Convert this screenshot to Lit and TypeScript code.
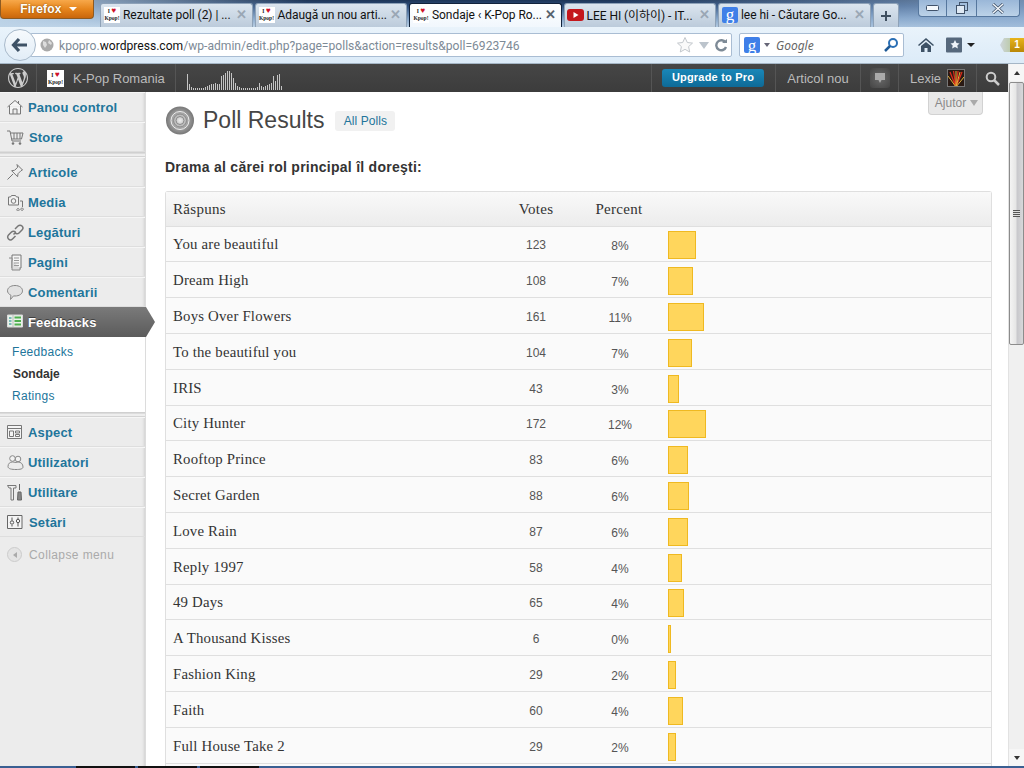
import { LitElement, css, html, svg } from 'lit';
import { customElement } from 'lit/decorators.js';

const POLL = [
  ['You are beautiful', 123, 8, 28],
  ['Dream High', 108, 7, 25],
  ['Boys Over Flowers', 161, 11, 36],
  ['To the beautiful you', 104, 7, 24],
  ['IRIS', 43, 3, 11],
  ['City Hunter', 172, 12, 38],
  ['Rooftop Prince', 83, 6, 20],
  ['Secret Garden', 88, 6, 21],
  ['Love Rain', 87, 6, 20],
  ['Reply 1997', 58, 4, 14],
  ['49 Days', 65, 4, 16],
  ['A Thousand Kisses', 6, 0, 3],
  ['Fashion King', 29, 2, 8],
  ['Faith', 60, 4, 15],
  ['Full House Take 2', 29, 2, 8],
  ['', 0, 0, 0],
] as const;

const SPARK = [16, 6, 3, 2, 2, 2, 2, 2, 2, 3, 4, 5, 6, 6, 7, 6, 6, 14, 15, 17, 19, 19, 17, 12, 7, 4, 3, 2, 2, 2, 2, 2, 2, 2, 2, 3, 7, 4, 3, 4, 5, 6, 7, 14, 9, 15, 16, 4];

const ICONS: Record<string, unknown> = {
  home: svg`<path d="M1.500 9 9 2.500 16.500 9M3.500 8v8h11V8M7 16v-5h4v5M12.500 3v3" fill="#f4f4f4" stroke="#777"/>`,
  cart: svg`<path d="M1 3h3l2 10h9M4.500 5H17l-1.500 6H5.800M8 5v6M11 5v6M14 5v6" fill="none" stroke="#777"/><circle cx="7" cy="15.500" r="1.300" fill="#777"/><circle cx="14" cy="15.500" r="1.300" fill="#777"/>`,
  pin: svg`<path d="M11 1.500 16.500 7l-1.500.7-3 3-.4 3-6-6 3-.4 3-3zM7 11 1.500 16.500" fill="#eee" stroke="#777"/>`,
  media: svg`<path d="M2.500 4h2l1-1.500h4L10.500 4h2v8h-10z" fill="#f2f2f2" stroke="#777"/><circle cx="7.500" cy="8" r="2.300" fill="none" stroke="#777"/><path d="M14 8h2.500v6M12 15.500a1.200 1.200 0 1 0 .1 0M16 15a1.200 1.200 0 1 0 .1 0" fill="none" stroke="#777"/>`,
  link: svg`<path d="m9 6 3-3a2.800 2.800 0 0 1 4 4l-3 3a2.800 2.800 0 0 1-4 0M10 9 7.500 11.500M9.500 9a2.800 2.800 0 0 0-4 0l-3 3a2.800 2.800 0 0 0 4 4l3-3" fill="none" stroke="#777" stroke-width="1.500"/>`,
  pages: svg`<path d="M6 2h9v13H6z" fill="#f4f4f4" stroke="#777"/><path d="M3 5h3v12h8v-2" fill="#ddd" stroke="#888"/><path d="M8 5h5M8 7.500h5M8 10h5M8 12.500h5" stroke="#999"/>`,
  comment: svg`<path d="M9 2.500c4.400 0 7.500 2.300 7.500 5.300S13.400 13 9 13c-.5 0-1 0-1.500-.1L4.500 16.500l.4-4.300C3 11.300 1.500 9.800 1.500 7.800 1.500 4.800 4.600 2.500 9 2.500z" fill="#e2e2e2" stroke="#888"/>`,
  feedback: svg`<path d="M1.500 3h15v12h-15z" fill="#e9f3e9" stroke="#d9d9d9"/><path d="M7 3v12" stroke="#bbb"/><path d="M8.500 5.500h6.500M8.500 9h6.500M8.500 12.500h6.500" stroke="#4fb04f" stroke-width="1.800"/><path d="M3 6h2.500M3 9h2.500M3 12h2.500" stroke="#58a8a8" stroke-width="1.300"/>`,
  aspect: svg`<path d="M1.500 2.500h14v13h-14z" fill="#f4f4f4" stroke="#777"/><path d="M1.500 5.500h14M3.500 8h4v5.500h-4zM9.500 8h4v2h-4zM9.500 11.500h4v2h-4z" fill="none" stroke="#777"/>`,
  users: svg`<circle cx="6.500" cy="5.500" r="2.800" fill="#f2f2f2" stroke="#888"/><circle cx="12" cy="6" r="2.800" fill="#f2f2f2" stroke="#888"/><path d="M2 13.500c0-3 2-4.500 4.500-4.500s2 1 5.500 0c3 0 5 2 5 5 0 2-3 2.500-7 2.500s-8-.5-8-3z" fill="#ececec" stroke="#888"/>`,
  tools: svg`<path d="M1.500 2.500h8.500v2.500H7.500v12H5V5H3z" fill="#eee" stroke="#777"/><path d="M13.500 1v6M12 9h3l.5 8h-4z" fill="#888" stroke="#666"/>`,
  settings: svg`<path d="M1.500 2.500h14.500v13H1.500z" fill="#f4f4f4" stroke="#666"/><path d="M6 4.500v3M6 12v1.500M12 4.500V6M12 10v3.500" stroke="#555"/><circle cx="6" cy="9.500" r="1.700" fill="none" stroke="#555"/><circle cx="12" cy="8" r="1.700" fill="none" stroke="#555"/>`,
};

const SIDE_TOP = [
  ['home', 'Panou control', 28],
  ['cart', 'Store', 29],
];
const SIDE_MID = [
  ['pin', 'Articole', 28],
  ['media', 'Media', 28],
  ['link', 'Legături', 28],
  ['pages', 'Pagini', 28],
  ['comment', 'Comentarii', 28],
];
const SIDE_END = [
  ['aspect', 'Aspect', 28],
  ['users', 'Utilizatori', 28],
  ['tools', 'Utilitare', 28],
  ['settings', 'Setări', 29],
];

@customElement('app-root')
export class AppRoot extends LitElement {
  static override styles = css`
    :host {
      display: flex;
      flex-direction: column;
      width: 1024px;
      height: 768px;
      overflow: hidden;
      background: #fff;
      font-family: 'Liberation Sans', Arial, sans-serif;
    }

    /* browser chrome */
    .tabstrip {
      display: flex;
      height: 27px;
      box-sizing: border-box;
      background:
        linear-gradient(90deg, rgba(190, 212, 232, 0.95) 0, rgba(190, 212, 232, 0) 30%, rgba(190, 212, 232, 0) 60%, rgba(150, 180, 214, 0.7) 100%),
        linear-gradient(#1d3557 0, #2f4f7c 6px, #7d9ec4 18px, #b9cfe4 27px);
      font: 12px Roboto, 'Noto Sans CJK KR', sans-serif;
      letter-spacing: -0.05px;
      color: #111;
    }
    .ff-btn {
      width: 94px;
      height: 19px;
      margin-right: 6px;
      box-sizing: border-box;
      display: flex;
      align-items: center;
      justify-content: center;
      gap: 7px;
      padding-left: 3px;
      background: linear-gradient(#f7a84a, #e6851c 50%, #c9660c);
      border: 1px solid #8d5a22;
      border-top: 0;
      border-radius: 0 0 4px 4px;
      color: #fff;
      font: bold 12px 'Liberation Sans', sans-serif;
      letter-spacing: 0.2px;
      text-shadow: 0 0 2px #7a4306;
    }
    .ff-btn i {
      border: 4px solid transparent;
      border-top: 4px solid #fff;
      border-bottom: 0;
    }
    .tabs {
      display: flex;
      gap: 2px;
      margin-top: 3px;
    }
    .tab {
      width: 152.5px;
      box-sizing: border-box;
      display: flex;
      align-items: center;
      gap: 3px;
      padding: 0 5px 2px 3px;
      background: linear-gradient(#dbe5ef, #bccbdb);
      border: 1px solid #8ea2b8;
      border-bottom: 0;
      border-radius: 3px 3px 0 0;
      white-space: nowrap;
    }
    .tab.active {
      background: linear-gradient(#fff, #f1f7fd);
      border-color: #12233c;
      border-bottom: 0;
    }
    .tab span {
      flex: 1;
      min-width: 0;
    }
    .tab .close {
      flex: none;
      color: #9aa7b5;
      font: bold 13px 'Liberation Sans', sans-serif;
    }
    .tab.active .close {
      color: #56616d;
    }
    .yt {
      flex: none;
      margin-left: -1px;
    }
    .newtab {
      width: 26px;
      display: flex;
      align-items: center;
      justify-content: center;
      background: linear-gradient(#dbe5ef, #bccbdb);
      border: 1px solid #8ea2b8;
      border-bottom: 0;
      border-radius: 3px 3px 0 0;
      box-sizing: border-box;
    }
    .winctl {
      margin: 0 4px 0 auto;
      width: 102px;
      height: 17px;
      display: flex;
      box-sizing: border-box;
      background: linear-gradient(#9ab7d8, #bcd2e8);
      border: 1px solid #56779e;
      border-top: 0;
      border-radius: 0 0 4px 4px;
    }
    .winctl div {
      display: flex;
      align-items: center;
      justify-content: center;
      border-right: 1px solid #56779e;
    }
    .winctl div:last-child {
      border-right: 0;
    }
    .wc-min {
      width: 27px;
    }
    .wc-max {
      width: 29px;
    }
    .wc-close {
      flex: 1;
    }

    .favicon {
      flex: none;
      width: 16px;
      height: 16px;
      background: #fff;
      display: flex;
      flex-direction: column;
      align-items: center;
      justify-content: center;
      font: bold 5.5px/7px 'Liberation Serif', serif;
      letter-spacing: 0;
      color: #222;
    }
    .favicon b {
      color: #d0142c;
      font-size: 8px;
    }
    .g-icon {
      flex: none;
      width: 16px;
      height: 16px;
      border-radius: 2px;
      background: #3f7fe8;
      color: #fff;
      display: flex;
      align-items: center;
      justify-content: center;
      font: 17px/13px 'Liberation Serif', serif;
    }

    .navbar {
      height: 37px;
      box-sizing: border-box;
      display: flex;
      align-items: center;
      padding: 0 0 0 4px;
      background: linear-gradient(#e9f3fb, #dcebf8);
      border-bottom: 1px solid #a5b6c6;
      position: relative;
    }
    .back {
      width: 32px;
      height: 32px;
      flex: none;
      box-sizing: border-box;
      border-radius: 50%;
      border: 1px solid #a9bacb;
      background: linear-gradient(#f6fafd, #e2edf7);
      display: flex;
      align-items: center;
      justify-content: center;
      position: relative;
      z-index: 1;
    }
    .urlbar,
    .searchbar {
      height: 24px;
      box-sizing: border-box;
      display: flex;
      align-items: center;
      background: #fff;
      border: 1px solid #a9bdd3;
      border-radius: 2px;
    }
    .urlbar {
      width: 702px;
      margin-left: -6px;
      padding: 0 3px 0 9px;
      color: #7d8a96;
      white-space: nowrap;
      font: 12.1px Roboto, sans-serif;
    }
    .urlbar b {
      font-weight: normal;
      color: #111;
    }
    .urlbar .addr {
      margin-left: 5px;
      padding-top: 1px;
      flex: 1;
      min-width: 0;
    }
    .urlbar svg {
      flex: none;
    }
    .urlbar svg + svg {
      margin-left: 4px;
    }
    .searchbar {
      width: 165px;
      margin-left: 7px;
      padding: 0 4px 0 4px;
      color: #666;
      font: italic 12px 'Noto Sans', sans-serif;
    }
    .searchbar span {
      flex: 1;
      margin-left: 6px;
    }
    .caret {
      border: 3.5px solid transparent;
      border-top: 4px solid #667;
      border-bottom: 0;
      margin-left: 4px;
    }
    .navicons {
      display: flex;
      align-items: center;
      gap: 12px;
      margin-left: 14px;
      flex: 1;
    }
    .navicons .caret {
      border-top-color: #222;
      border-left-width: 4px;
      border-right-width: 4px;
      margin: 0 0 0 -7px;
    }
    .badge {
      margin-left: auto;
      width: 24px;
      height: 14px;
      display: flex;
      justify-content: flex-end;
      background: linear-gradient(90deg, #cfd6dc, #b6c79a 60%, #8fae5a);
      clip-path: polygon(0 50%, 4px 0, 100% 0, 100% 100%, 4px 100%);
    }
    .badge span {
      width: 14px;
      background: linear-gradient(#e8b41a, #b98707);
      color: #fff;
      font: bold 10px/14px 'Liberation Sans', sans-serif;
      text-align: center;
    }

    /* page + scrollbar */
    .viewport {
      flex: 1;
      min-height: 0;
      display: flex;
    }
    .page {
      width: 1008px;
      display: flex;
      flex-direction: column;
      position: relative;
      overflow: hidden;
    }
    .scrollbar {
      width: 16px;
      display: flex;
      flex-direction: column;
      background: #f0f0f0;
      border-left: 1px solid #e2e2e2;
      box-sizing: border-box;
    }
    .sb-up,
    .sb-down {
      height: 17px;
      display: flex;
      align-items: center;
      justify-content: center;
      background: #f6f6f6;
    }
    .sb-up i {
      border: 3.5px solid transparent;
      border-bottom: 4px solid #333;
      border-top: 0;
    }
    .sb-down i {
      border: 3.5px solid transparent;
      border-top: 4px solid #333;
      border-bottom: 0;
    }
    .sb-thumb {
      height: 263px;
      margin-top: 1px;
      box-sizing: border-box;
      border: 1px solid #8c8c8c;
      border-radius: 2px;
      background: linear-gradient(90deg, #f4f4f4, #e6e6e6 45%, #c8c8cc 55%, #d8d8da);
      display: flex;
      align-items: center;
      justify-content: center;
    }
    .sb-thumb i {
      width: 7px;
      height: 7px;
      background: repeating-linear-gradient(#555 0 1px, #ddd 1px 2px);
    }
    .sb-track {
      flex: 1;
    }
    .taskbar {
      height: 2px;
      background: #3a5f92;
      display: flex;
    }
    .taskbar i {
      width: 59px;
      margin-left: 3px;
      background: #111;
    }
    .taskbar i:first-child {
      margin-left: 76px;
    }

    /* admin bar */
    .adminbar {
      height: 28px;
      flex: none;
      display: flex;
      align-items: center;
      background: linear-gradient(#464646, #3c3c3c);
      color: #bbb;
      font-size: 13px;
    }
    .ab {
      height: 100%;
      display: flex;
      align-items: center;
      box-sizing: border-box;
      border-right: 1px solid #555;
    }
    .ab-wp {
      width: 37px;
      justify-content: center;
    }
    .ab-site {
      width: 139px;
      padding-left: 10px;
      gap: 9px;
    }
    .ab-site .favicon {
      width: 17px;
      height: 17px;
    }
    .spark {
      display: flex;
      align-items: flex-end;
      gap: 0;
      margin: 4px 0 0 11px;
      height: 20px;
    }
    .spark i {
      width: 1px;
      margin-right: 1px;
      background: #c4c4c4;
    }
    .ab-right {
      margin-left: auto;
      display: flex;
      height: 100%;
      border-left: 1px solid #555;
    }
    .ab-up {
      padding: 0 11px 0 10px;
    }
    .upgrade {
      width: 102px;
      height: 18px;
      border-radius: 3px;
      background: linear-gradient(#1a87b8, #0e6a97);
      color: #fff;
      font: bold 11px/17px 'Liberation Sans', sans-serif;
      text-align: center;
      letter-spacing: 0.2px;
    }
    .ab-new {
      width: 85px;
      justify-content: center;
    }
    .ab-bubble {
      width: 38px;
      justify-content: center;
    }
    .ab-bubble div {
      width: 20px;
      height: 20px;
      border-radius: 3px;
      background: radial-gradient(#6a6a6a, #444);
      display: flex;
      align-items: center;
      justify-content: center;
    }
    .ab-user {
      width: 78px;
      padding-left: 11px;
      gap: 6px;
    }
    .avatar {
      flex: none;
    }
    .ab-search {
      width: 31px;
      justify-content: center;
      border-right: 0;
    }

    /* wp-admin */
    .wrap {
      flex: 1;
      min-height: 0;
      display: flex;
    }
    .side {
      width: 146px;
      flex: none;
      box-sizing: border-box;
      background: #ececec;
      border-right: 1px solid #dcdcdc;
      box-shadow: inset -3px 0 3px -2px #cfcfcf;
      font-size: 13px;
      font-weight: bold;
      color: #21759b;
      letter-spacing: 0.15px;
    }
    .item {
      height: 30px;
      box-sizing: border-box;
      display: flex;
      align-items: center;
      position: relative;
      border-top: 1px solid #f6f6f6;
      border-bottom: 1px solid #dedede;
    }
    .item svg {
      position: absolute;
      left: 6px;
      top: 5px;
    }
    .side-sep {
      height: 5px;
      background: linear-gradient(#d0d0d0 0 1px, #dcdcdc 1px 2px, #eee 2px 4px, #d4d4d4 4px);
    }
    .item.current {
      background: linear-gradient(#7a7a7a, #5b5b5b);
      border: 0;
      padding-left: 28px;
      color: #fff;
      text-shadow: 0 -1px 0 #3f3f3f;
      overflow: visible;
    }
    .item.current::after {
      content: '';
      position: absolute;
      left: 145px;
      top: 0;
      width: 10px;
      height: 30px;
      background: linear-gradient(#7a7a7a, #5b5b5b);
      clip-path: polygon(0 0, 1px 0, 100% 50%, 1px 100%, 0 100%);
    }
    .sub {
      height: 75px;
      box-sizing: border-box;
      padding-top: 4px;
      background: #fff;
      font-size: 12px;
      font-weight: normal;
      line-height: 22px;
      letter-spacing: 0.3px;
    }
    .sub div {
      padding-left: 12px;
    }
    .sub .on {
      padding-left: 13px;
      color: #333;
      font-weight: bold;
      letter-spacing: 0;
    }
    .collapse {
      display: flex;
      align-items: center;
      gap: 7px;
      height: 35px;
      padding-left: 7px;
      font-size: 12px;
      font-weight: normal;
      color: #aaa;
      letter-spacing: 0.4px;
    }
    .collapse i {
      width: 15px;
      height: 15px;
      box-sizing: border-box;
      border-radius: 50%;
      border: 1px solid #ccc;
      background: #e4e4e4;
      display: flex;
      align-items: center;
      justify-content: center;
    }
    .collapse i::before {
      content: '';
      border: 3px solid transparent;
      border-right: 4px solid #aaa;
      border-left: 0;
    }

    .content {
      flex: 1;
      min-width: 0;
      padding: 14px 16px 0 19px;
      color: #333;
    }
    .title-row {
      display: flex;
      align-items: center;
      height: 29px;
    }
    .title-row h2 {
      margin: 0 11px 0 8px;
      font-size: 23px;
      font-weight: normal;
      color: #464646;
    }
    .all-polls {
      height: 20px;
      width: 60px;
      box-sizing: border-box;
      margin-top: 1px;
      border-radius: 3px;
      background: #f1f1f1;
      color: #21759b;
      font-size: 12px;
      line-height: 20px;
      text-align: center;
      letter-spacing: 0.1px;
    }
    .content h3 {
      margin: 0;
      padding-top: 24px;
      height: 32px;
      font-size: 14px;
      line-height: 16px;
      font-weight: bold;
      letter-spacing: 0.26px;
      color: #333;
      box-sizing: content-box;
    }
    .table {
      border: 1px solid #dfdfdf;
      border-bottom: 0;
      border-radius: 3px 3px 0 0;
      background: #fafafa;
    }
    .row {
      display: grid;
      grid-template-columns: 335px 70px 96px 1fr;
      align-items: center;
      height: 35.8px;
      box-sizing: border-box;
      border-top: 1px solid #dfdfdf;
      background: #fafafa;
      font: 12px 'Liberation Sans', sans-serif;
      color: #555;
    }
    .row .name {
      padding: 2px 0 0 7px;
      font: 14.8px 'Liberation Serif', serif;
      letter-spacing: 0.2px;
      color: #333;
    }
    .row .num {
      text-align: center;
      padding: 3px 0 0 0;
    }
    .row .num.pct {
      padding: 5px 0 0 2px;
    }
    .head {
      height: 33.6px;
      border-top: 0;
      background: linear-gradient(#f9f9f9, #ececec);
    }
    .head .name,
    .head .num,
    .head .num.pct {
      font: 15px 'Liberation Serif', serif;
      letter-spacing: 0.3px;
      color: #333;
      padding: 2px 0 0;
    }
    .head .name {
      padding-left: 7px;
    }
    .bar {
      height: 28px;
      box-sizing: border-box;
      margin: 3px 0 0 1px;
      background: #ffd65c;
      border: 1px solid #efb921;
    }

    .help {
      position: absolute;
      right: 25px;
      top: 28px;
      width: 55px;
      height: 23px;
      box-sizing: border-box;
      display: flex;
      align-items: center;
      justify-content: center;
      gap: 4px;
      padding-left: 2px;
      background: #e8e8e8;
      border: 1px solid #d2d2d2;
      border-top: 0;
      border-radius: 0 0 4px 4px;
      color: #8a8a8a;
      font-size: 12px;
    }
    .help i {
      border: 4px solid transparent;
      border-top: 6px solid #aaa;
      border-bottom: 0;
    }
  `;

  private favicon() {
    return html`<div class="favicon"><div>I <b>♥</b></div><div>Kpop!</div></div>`;
  }

  private youtube() {
    return html`<svg class="yt" width="17" height="16" viewBox="0 0 17 16">
      <rect y="2" width="17" height="12" rx="3" fill="#c4171c" />
      <path d="M6.500 5l5 3-5 3z" fill="#fff" />
    </svg>`;
  }

  private sideItem(item: (string | number)[]) {
    const [icon, label, left] = item;
    return html`<div class="item" style="padding-left:${left}px">
      <svg width="18" height="18" viewBox="0 0 18 18">${ICONS[icon as string]}</svg>${label}
    </div>`;
  }

  private renderTabs() {
    return html`
      <div class="tabstrip">
        <div class="ff-btn">Firefox <i></i></div>
        <div class="tabs">
          <div class="tab">${this.favicon()}<span>Rezultate poll (2) | ...</span><div class="close">✕</div></div>
          <div class="tab">${this.favicon()}<span>Adaugă un nou arti...</span><div class="close">✕</div></div>
          <div class="tab active">${this.favicon()}<span>Sondaje ‹ K-Pop Ro...</span><div class="close">✕</div></div>
          <div class="tab">${this.youtube()}<span>LEE HI (이하이) - IT...</span><div class="close">✕</div></div>
          <div class="tab"><div class="g-icon">g</div><span>lee hi - Căutare Go...</span><div class="close">✕</div></div>
          <div class="newtab">
            <svg width="12" height="12" viewBox="0 0 12 12"><path d="M6 1v10M1 6h10" stroke="#3f4f60" stroke-width="2" /></svg>
          </div>
        </div>
        <div class="winctl">
          <div class="wc-min"><svg width="13" height="7" viewBox="0 0 13 7"><rect x=".5" y=".5" width="12" height="5" rx="1" fill="#f4f8fc" stroke="#40526a" /></svg></div>
          <div class="wc-max"><svg width="12" height="12" viewBox="0 0 12 12"><rect x="3.500" y=".5" width="8" height="8" fill="none" stroke="#40526a" /><rect x=".5" y="3.500" width="8" height="8" fill="#dfe9f4" stroke="#40526a" /></svg></div>
          <div class="wc-close"><svg width="14" height="11" viewBox="0 0 14 11"><path d="M2 1l10 9M12 1 2 10" stroke="#40526a" stroke-width="3" /><path d="M2 1l10 9M12 1 2 10" stroke="#f4f8fc" stroke-width="1.500" /></svg></div>
        </div>
      </div>
    `;
  }

  private renderNav() {
    return html`
      <div class="navbar">
        <div class="back">
          <svg width="18" height="16" viewBox="0 0 18 16"><path d="M8 2 2.500 8 8 14M3 8h13" fill="none" stroke="#3e5266" stroke-width="3.200" /></svg>
        </div>
        <div class="urlbar">
          <svg width="14" height="14" viewBox="0 0 14 14">
            <circle cx="7" cy="7" r="6.500" fill="#a9a9a9" />
            <path d="M3 3l3 1 1 3-2 3-2-3zM9 2l3 3-1 2-3-2z" fill="#dcdcdc" />
          </svg>
          <span class="addr">kpopro.<b>wordpress.com</b>/wp-admin/edit.php?page=polls&amp;action=results&amp;poll=6923746</span>
          <svg width="18" height="18" viewBox="0 0 18 18"><path d="M9 1.500l2.300 5 5.200.6-3.900 3.500 1.100 5.400L9 13.300 4.300 16l1.100-5.400L1.500 7.100l5.200-.6z" fill="#fafafa" stroke="#c3c8cd" /></svg>
          <svg width="12" height="10" viewBox="0 0 12 10"><path d="M1 2h10L6 9z" fill="#bcc4cc" /></svg>
          <svg width="14" height="14" viewBox="0 0 14 14"><path d="M11.500 4.500A5 5 0 1 0 12 9" fill="none" stroke="#7d8a96" stroke-width="2.400" /><path d="M8 5h5V1z" fill="#7d8a96" /></svg>
        </div>
        <div class="searchbar">
          <div class="g-icon">g</div><div class="caret"></div><span>Google</span>
          <svg width="16" height="16" viewBox="0 0 16 16"><circle cx="10" cy="6" r="4" fill="none" stroke="#2a6fb5" stroke-width="2" /><path d="M7 9l-5 5" stroke="#1f5a96" stroke-width="2.500" /></svg>
        </div>
        <div class="navicons">
          <svg width="16" height="14" viewBox="0 0 16 14"><path d="M8 0 0 7l1 1 7-6 7 6 1-1zM3 8v6h3.500v-4h3v4H13V8L8 4z" fill="#3e5266" /></svg>
          <svg width="16" height="16" viewBox="0 0 16 16"><rect width="16" height="15" y=".5" rx="1" fill="#56687c" /><path d="M9 3l1.500 3 3 .4-2.200 2 .6 3L9 10l-2.900 1.400.6-3-2.200-2 3-.4z" fill="#eef3f8" /></svg>
          <div class="caret"></div>
          <div class="badge"><span>1</span></div>
        </div>
      </div>
    `;
  }

  private renderAdminBar() {
    return html`
      <div class="adminbar">
        <div class="ab ab-wp">
          <svg width="20" height="20" viewBox="0 0 20 20"><path fill="#ccc" d="M20 10c0-5.510-4.490-10-10-10C4.480 0 0 4.490 0 10c0 5.520 4.480 10 10 10 5.510 0 10-4.480 10-10zM7.780 15.370L4.370 6.220c.55-.02 1.170-.08 1.170-.08.5-.06.44-1.130-.06-1.110 0 0-1.450.11-2.370.11-.18 0-.37 0-.58-.01C4.120 2.690 6.870 1.110 10 1.110c2.330 0 4.450.87 6.050 2.340-.68-.11-1.650.39-1.650 1.580 0 .74.45 1.360.9 2.100.35.61.55 1.360.55 2.460 0 1.490-1.400 5-1.400 5l-3.030-8.370c.54-.02.82-.17.82-.17.5-.05.44-1.250-.06-1.220 0 0-1.440.12-2.380.12-.87 0-2.330-.12-2.330-.12-.5-.03-.56 1.200-.06 1.220l.92.08 1.260 3.410zM17.410 10c.24-.64.74-1.870.43-4.250.7 1.290 1.050 2.710 1.050 4.250 0 3.290-1.730 6.240-4.400 7.780.97-2.590 1.940-5.200 2.920-7.780zM6.100 18.090C3.120 16.650 1.110 13.530 1.110 10c0-1.300.23-2.480.72-3.590C3.250 10.300 4.670 14.200 6.100 18.090zm4.030-6.630l2.580 6.980c-.86.29-1.760.45-2.710.45-.79 0-1.570-.11-2.290-.33.81-2.380 1.620-4.740 2.420-7.100z" /></svg>
        </div>
        <div class="ab ab-site">${this.favicon()}K-Pop Romania</div>
        <div class="spark">
          ${SPARK.map((h) => html`<i style="height:${h}px"></i>`)}
        </div>
        <div class="ab-right">
          <div class="ab ab-up"><div class="upgrade">Upgrade to Pro</div></div>
          <div class="ab ab-new">Articol nou</div>
          <div class="ab ab-bubble">
            <div><svg width="12" height="12" viewBox="0 0 12 12"><path d="M1 1h10v7H7.500L6 11 4.500 8H1z" fill="#aaa" /></svg></div>
          </div>
          <div class="ab ab-user">
            Lexie
            <svg class="avatar" width="18" height="18" viewBox="0 0 18 18">
              <rect width="18" height="18" fill="#2a1a14" />
              <path d="M9 18 3 3M9 18 6.500 2M9 18 11 2M9 18 15 3" stroke="#d92b1c" stroke-width="1.300" />
              <path d="M9 18 1 7M9 18 9 2M9 18 13 3M9 18 17 8" stroke="#e3b23a" />
              <rect x=".5" y=".5" width="17" height="17" fill="none" stroke="#777" />
            </svg>
          </div>
          <div class="ab ab-search">
            <svg width="15" height="15" viewBox="0 0 15 15"><circle cx="6" cy="6" r="4.300" fill="none" stroke="#ccc" stroke-width="2" /><path d="M9 9l5 5" stroke="#ccc" stroke-width="2.500" /></svg>
          </div>
        </div>
      </div>
    `;
  }

  private renderSidebar() {
    return html`
      <div class="side">
        ${SIDE_TOP.map((i) => this.sideItem(i))}
        <div class="side-sep"></div>
        ${SIDE_MID.map((i) => this.sideItem(i))}
        <div class="item current">
          <svg width="18" height="18" viewBox="0 0 18 18">${ICONS.feedback}</svg>Feedbacks
        </div>
        <div class="sub">
          <div>Feedbacks</div>
          <div class="on">Sondaje</div>
          <div>Ratings</div>
        </div>
        <div class="side-sep"></div>
        ${SIDE_END.map((i) => this.sideItem(i))}
        <div class="collapse"><i></i>Collapse menu</div>
      </div>
    `;
  }

  private renderContent() {
    return html`
      <div class="content">
        <div class="title-row">
          <svg width="30" height="30" viewBox="0 0 30 30">
            <defs>
              <radialGradient id="disc"><stop offset="0" stop-color="#eee" /><stop offset=".55" stop-color="#a5a5a5" /><stop offset="1" stop-color="#777" /></radialGradient>
            </defs>
            <circle cx="15" cy="14.500" r="14" fill="url(#disc)" />
            <circle cx="15" cy="14.500" r="9" fill="none" stroke="#eee" />
            <circle cx="15" cy="14.500" r="6.500" fill="none" stroke="#8a8a8a" />
            <circle cx="15" cy="14.500" r="4" fill="none" stroke="#8a8a8a" />
          </svg>
          <h2>Poll Results</h2>
          <div class="all-polls">All Polls</div>
        </div>
        <h3>Drama al cărei rol principal îl doreşti:</h3>
        <div class="table">
          <div class="row head">
            <div class="name">Răspuns</div>
            <div class="num">Votes</div>
            <div class="num pct">Percent</div>
          </div>
          ${POLL.map(
            ([name, votes, pct, w]) => html`
              <div class="row">
                <div class="name">${name}</div>
                ${name
                  ? html`<div class="num">${votes}</div>
                      <div class="num pct">${pct}%</div>
                      <div class="bar" style="width:${w}px"></div>`
                  : ''}
              </div>
            `,
          )}
        </div>
      </div>
    `;
  }

  override render() {
    return html`
      ${this.renderTabs()} ${this.renderNav()}
      <div class="viewport">
        <div class="page">
          ${this.renderAdminBar()}
          <div class="wrap">${this.renderSidebar()} ${this.renderContent()}</div>
          <div class="help">Ajutor <i></i></div>
        </div>
        <div class="scrollbar">
          <div class="sb-up"><i></i></div>
          <div class="sb-thumb"><i></i></div>
          <div class="sb-track"></div>
          <div class="sb-down"><i></i></div>
        </div>
      </div>
      <div class="taskbar"><i></i><i></i><i></i></div>
    `;
  }
}
